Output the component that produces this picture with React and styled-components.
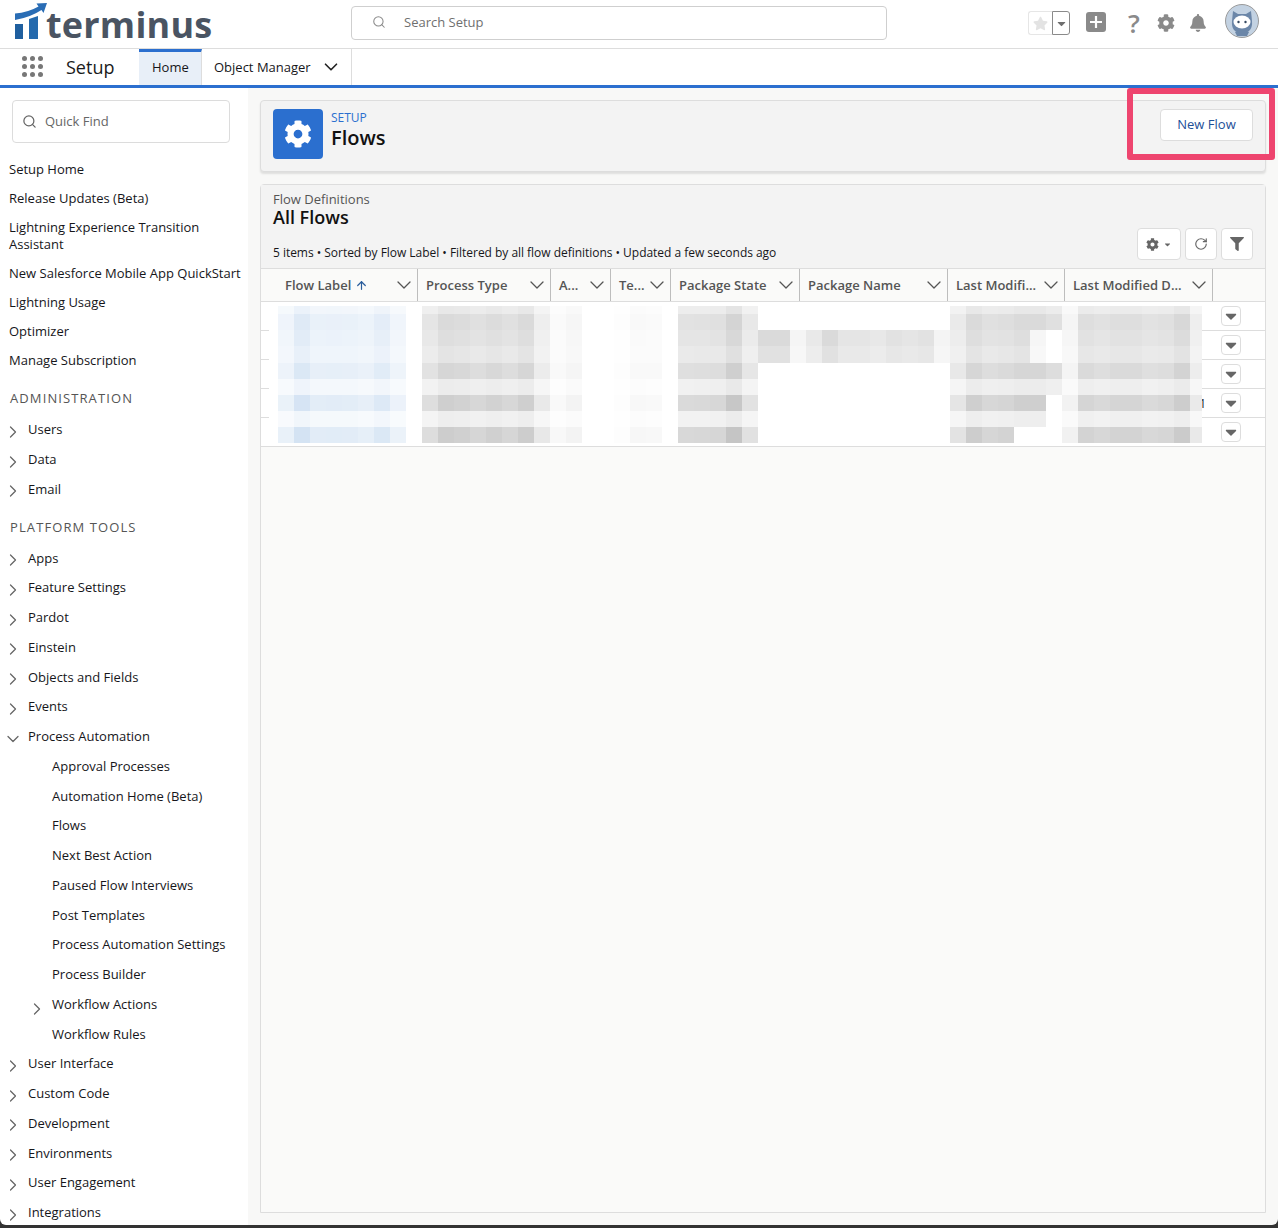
import React from 'react';
import styled, { createGlobalStyle } from 'styled-components';
import { ChevronDown, ChevronRight, Search, ArrowUp, RotateCw } from 'lucide-react';
import { FaCog, FaBell, FaFilter, FaStar, FaCaretDown } from 'react-icons/fa';

const GlobalStyle = createGlobalStyle`
  html, body { margin: 0; padding: 0; background: #fff; }
  body { font-family: "Open Sans", "Liberation Sans", sans-serif; font-size: 13px; color: #16161a; }
  * { box-sizing: border-box; }
`;

const topLinks = [
  'Setup Home',
  'Release Updates (Beta)',
  'Lightning Experience Transition Assistant',
  'New Salesforce Mobile App QuickStart',
  'Lightning Usage',
  'Optimizer',
  'Manage Subscription',
];

const adminLinks = ['Users', 'Data', 'Email'];

const platformBefore = ['Apps', 'Feature Settings', 'Pardot', 'Einstein', 'Objects and Fields', 'Events'];
const automation = [
  { label: 'Approval Processes' },
  { label: 'Automation Home (Beta)' },
  { label: 'Flows' },
  { label: 'Next Best Action' },
  { label: 'Paused Flow Interviews' },
  { label: 'Post Templates' },
  { label: 'Process Automation Settings' },
  { label: 'Process Builder' },
  { label: 'Workflow Actions', expandable: true },
  { label: 'Workflow Rules' },
];
const platformAfter = ['User Interface', 'Custom Code', 'Development', 'Environments', 'User Engagement', 'Integrations'];

const columns = [
  { label: 'Flow Label', width: 157, first: true, sorted: true },
  { label: 'Process Type', width: 133 },
  { label: 'A...', width: 60 },
  { label: 'Te...', width: 60 },
  { label: 'Package State', width: 129 },
  { label: 'Package Name', width: 148 },
  { label: 'Last Modifi...', width: 117 },
  { label: 'Last Modified D...', width: 148 },
];

// blurred table content, x is the left edge of a 16px wide cell
const mosaicRows = [
  { y: 0, h: 8, k: 0.55 },
  { y: 8, h: 16, k: 0.9 },
  { y: 24, h: 16, k: 0.8 },
  { y: 40, h: 17, k: 0.65 },
  { y: 57, h: 16, k: 1 },
  { y: 73, h: 16, k: 0.45 },
  { y: 89, h: 16, k: 1.15 },
  { y: 105, h: 16, k: 0.4 },
  { y: 121, h: 16, k: 1.2 },
];
const blueCols = [0.45, 0.9, 0.6, 0.62, 0.6, 0.52, 0.75, 0.42];
const grayCols = [0.62, 0.9, 0.85, 0.75, 0.85, 0.75, 0.9, 0.42, 0.12, 0.22, 0, 0, 0.04, 0.14, 0.12, 0, 0.03];
const stateCols = [0.7, 0.72, 0.75, 1.05, 0.55];
const nameCols = [1, 1, 0.28, 0.6, 1, 0.72, 0.72, 0.62, 0.8, 0.72, 0.8, 0.3];
const dateCols = [0.5, 0.9, 0.75, 0.8, 0.9, 0.9, 0.75, 0.25, 0.8, 0.72, 0.8, 0.8, 0.7, 0.75, 0.95, 0.4];

const mosaicCells = mosaicRows.flatMap((row, r) => {
  const cells = [];
  blueCols.forEach((d, i) => {
    const v = d * row.k;
    cells.push({ x: 278 + i * 16, row, fill: `rgb(${255 - v * 40},${255 - v * 26},${255 - v * 11})` });
  });
  const gray = (x, d) => {
    const v = Math.round(255 - d * row.k * 46);
    cells.push({ x, row, fill: `rgb(${v},${v},${v})` });
  };
  grayCols.forEach((d, i) => gray(422 + i * 16, d));
  stateCols.forEach((d, i) => gray(678 + i * 16, d));
  if (r === 2 || r === 3) nameCols.forEach((d, i) => gray(758 + i * 16, d));
  dateCols.forEach((d, i) => {
    const x = 950 + i * 16;
    if ((r === 2 || r === 3 || r === 6 || r === 7) && x === 1046) return;
    if ((r === 2 || r === 3) && x === 1030) return gray(x, 0.25);
    if (r === 8 && x >= 1014 && x <= 1046) return;
    gray(x, d);
  });
  return cells;
});

const App = () => (
  <>
    <GlobalStyle />
    <Page>
      <Header>
        <Logo>
          <svg width="36" height="40" viewBox="0 0 36 40">
            <path d="M1 20 L1 13.5 Q14 12.5 24.5 6.5 L22.5 3.5 L33 3 L29.5 13 L27.5 10 Q16 17.5 1 20 Z" fill="#2a6db5" />
            <rect x="1" y="24" width="8" height="15" fill="#1f5f9f" />
            <path d="M15 19 L24 16 L24 39 L15 39 Z" fill="#256aad" />
          </svg>
          <LogoText>terminus</LogoText>
        </Logo>
        <SearchBox>
          <Search size={14} strokeWidth={1.8} color="#8a8a8a" />
          <span>Search Setup</span>
        </SearchBox>
        <Actions>
          <Favorites>
            <StarBox><FaStar size={15} color="#e3e3e3" /></StarBox>
            <StarDrop><FaCaretDown size={13} color="#6f6f6f" /></StarDrop>
          </Favorites>
          <PlusBox>
            <svg width="20" height="20" viewBox="0 0 20 20">
              <path d="M10 4 V16 M4 10 H16" stroke="#fff" strokeWidth="2.2" />
            </svg>
          </PlusBox>
          <Help>?</Help>
          <IconSlot><FaCog size={18} color="#8a8a8a" /></IconSlot>
          <IconSlot><FaBell size={18} color="#8a8a8a" /></IconSlot>
          <Avatar>
            <svg width="34" height="34" viewBox="0 0 34 34">
              <circle cx="17" cy="17" r="16.5" fill="#c3d2e2" stroke="#9a9a9a" />
              <path d="M8 7 L13 10 H21 L26 7 L27 17 Q28 29 17 29 Q6 29 7 17 Z" fill="#6b86a8" />
              <ellipse cx="17" cy="18" rx="8.5" ry="6.5" fill="#fff" />
              <circle cx="13.5" cy="18" r="1.2" fill="#33475f" />
              <circle cx="20.5" cy="18" r="1.2" fill="#33475f" />
              <path d="M10 28 Q17 24 24 28 L22 32 H12 Z" fill="#6b86a8" />
            </svg>
          </Avatar>
        </Actions>
      </Header>
      <NavBar>
        <AppGrid>
          {Array.from({ length: 9 }).map((_, i) => <Dot key={i} />)}
        </AppGrid>
        <AppName>Setup</AppName>
        <HomeTab>Home</HomeTab>
        <MenuTab>
          Object Manager
          <ChevronDown size={22} strokeWidth={1.8} color="#222" />
        </MenuTab>
      </NavBar>
      <Body>
        <Sidebar>
          <QuickFind>
            <Search size={15} strokeWidth={2} color="#666" />
            <span>Quick Find</span>
          </QuickFind>
          <TopList>
            {topLinks.map((label) => <TopLink key={label}>{label}</TopLink>)}
          </TopList>
          <SectionTitle>ADMINISTRATION</SectionTitle>
          {adminLinks.map((label) => <TreeItem key={label} label={label} />)}
          <SectionTitle second>PLATFORM TOOLS</SectionTitle>
          {platformBefore.map((label) => <TreeItem key={label} label={label} />)}
          <TreeItem label="Process Automation" open />
          {automation.map((item) => (
            <TreeItem key={item.label} label={item.label} nested expandable={item.expandable} />
          ))}
          {platformAfter.map((label) => <TreeItem key={label} label={label} />)}
        </Sidebar>
        <Main>
          <PageHeader>
            <SetupIcon><FaCog size={28} color="#fff" /></SetupIcon>
            <TitleBlock>
              <Eyebrow>SETUP</Eyebrow>
              <PageTitle>Flows</PageTitle>
            </TitleBlock>
            <NewButton>New Flow</NewButton>
          </PageHeader>
          <ListCard>
            <ListHead>
              <ListMeta>
                <ListKicker>Flow Definitions</ListKicker>
                <ListTitle>All Flows</ListTitle>
                <ListInfo>5 items • Sorted by Flow Label • Filtered by all flow definitions • Updated a few seconds ago</ListInfo>
              </ListMeta>
              <Toolbar>
                <ToolButton wide>
                  <FaCog size={13} color="#666" />
                  <FaCaretDown size={9} color="#666" />
                </ToolButton>
                <ToolButton><RotateCw size={14} strokeWidth={2} color="#666" /></ToolButton>
                <ToolButton><FaFilter size={14} color="#666" /></ToolButton>
              </Toolbar>
            </ListHead>
            <HeadRow>
              {columns.map((col) => (
                <HeadCell key={col.label} width={col.width} first={col.first}>
                  <HeadLabel>
                    {col.label}
                    {col.sorted && <ArrowUp size={13} strokeWidth={2.2} color="#2a5d9c" />}
                  </HeadLabel>
                  <ChevronDown size={24} strokeWidth={1.3} color="#555" />
                </HeadCell>
              ))}
            </HeadRow>
            <TableBody>
              {[0, 1, 2, 3, 4].map((i) => (
                <Row key={i}>
                  {i === 3 && <Overflow>1</Overflow>}
                  <RowMenu><FaCaretDown size={18} color="#666" /></RowMenu>
                </Row>
              ))}
              <Mosaic width="933" height="137" viewBox="269 0 933 137">
                <rect x="269" y="0" width="933" height="137" fill="#fff" />
                {mosaicCells.map((c, i) => (
                  <rect key={i} x={c.x} y={c.row.y} width="16" height={c.row.h} fill={c.fill} />
                ))}
              </Mosaic>
            </TableBody>
          </ListCard>
        </Main>
      </Body>
      <Marker />
    </Page>
  </>
);

const TreeItem = ({ label, nested, open, expandable }) => (
  <TreeRow nested={nested}>
    {!nested && (open
      ? <ChevronDown size={20} strokeWidth={1.5} color="#666" />
      : <ChevronRight size={20} strokeWidth={1.5} color="#666" />)}
    {nested && expandable && <NestedArrow><ChevronRight size={20} strokeWidth={1.5} color="#666" /></NestedArrow>}
    <span>{label}</span>
  </TreeRow>
);

export default App;

const Page = styled.div`
  position: relative;
  width: 1278px;
  height: 1228px;
  display: flex;
  flex-direction: column;
  overflow: hidden;
  padding-bottom: 3px;
  background: #333;
`;

const Header = styled.header`
  height: 49px;
  flex: none;
  display: flex;
  align-items: flex-start;
  background: #fff;
  border-bottom: 1px solid #dddddd;
`;

const Logo = styled.div`
  width: 351px;
  height: 48px;
  padding: 0 0 0 14px;
  display: flex;
  align-items: flex-start;
  flex: none;
`;

const LogoText = styled.span`
  font-family: "Open Sans", sans-serif;
  font-weight: 700;
  font-size: 36px;
  line-height: 50px;
  letter-spacing: 0.2px;
  color: #4a5462;
  margin-left: -4px;
`;

const SearchBox = styled.div`
  width: 536px;
  height: 34px;
  margin-top: 6px;
  flex: none;
  display: flex;
  align-items: center;
  gap: 18px;
  padding: 0 0 2px 20px;
  background: #fff;
  border: 1px solid #cfcfcf;
  border-radius: 4px;
  color: #6f6f6f;
`;

const Actions = styled.div`
  margin-left: 141px;
  height: 46px;
  display: flex;
  align-items: center;
`;

const Favorites = styled.div`
  display: flex;
  height: 24px;
`;

const StarBox = styled.div`
  width: 24px;
  display: flex;
  align-items: center;
  justify-content: center;
  border: 1px solid #e6e6e6;
  border-right: none;
  border-radius: 3px 0 0 3px;
`;

const StarDrop = styled.div`
  width: 18px;
  display: flex;
  align-items: center;
  justify-content: center;
  border: 1px solid #8a8a8a;
  border-radius: 0 3px 3px 0;
`;

const PlusBox = styled.div`
  width: 20px;
  height: 20px;
  margin: 0 0 2px 16px;
  border-radius: 3px;
  background: #8a8a8a;
`;

const Help = styled.div`
  width: 20px;
  margin-left: 18px;
  text-align: center;
  font-size: 26px;
  line-height: 24px;
  font-weight: 600;
  color: #8a8a8a;
`;

const IconSlot = styled.div`
  width: 20px;
  margin-left: 12px;
  display: flex;
  justify-content: center;
`;

const Avatar = styled.div`
  width: 34px;
  height: 34px;
  margin: -4px 0 0 17px;
`;

const NavBar = styled.nav`
  height: 39px;
  flex: none;
  display: flex;
  align-items: stretch;
  background: #fff;
  border-bottom: 3px solid #2b6fcf;
`;

const AppGrid = styled.div`
  width: 21px;
  height: 21px;
  margin: 7px 23px 0 22px;
  display: grid;
  grid-template-columns: repeat(3, 5px);
  grid-template-rows: repeat(3, 5px);
  gap: 3px;
`;

const Dot = styled.span`
  border-radius: 50%;
  background: #777;
`;

const AppName = styled.div`
  width: 73px;
  font-size: 18px;
  line-height: 36px;
  color: #1a1a1a;
`;

const HomeTab = styled.div`
  width: 63px;
  display: flex;
  align-items: center;
  padding: 0 0 3px 13px;
  background: #e8eff8;
  border-top: 3px solid #2b6fcf;
  border-right: 1px solid #ddd;
`;

const MenuTab = styled.div`
  width: 150px;
  display: flex;
  align-items: center;
  justify-content: space-between;
  padding: 0 9px 0 12px;
  white-space: nowrap;
  border-right: 1px solid #ddd;
`;

const Body = styled.div`
  flex: 1;
  min-height: 0;
  display: flex;
  overflow: hidden;
  border-radius: 0 0 6px 6px;
`;

const Sidebar = styled.aside`
  width: 248px;
  flex: none;
  padding: 12px 0 0 0;
  overflow: hidden;
  background: #fff;
`;

const QuickFind = styled.div`
  width: 218px;
  height: 43px;
  margin-left: 12px;
  display: flex;
  align-items: center;
  gap: 8px;
  padding: 0 0 1px 9px;
  border: 1px solid #dcdcdc;
  border-radius: 4px;
  color: #666;
`;

const TopList = styled.div`
  margin-top: 12px;
`;

const TopLink = styled.div`
  padding: 6px 4px 6px 9px;
  line-height: 17px;
`;

const SectionTitle = styled.div`
  margin-top: 9px;
  padding: 6px 10px ${({ second }) => (second ? '7px' : '8px')};
  font-size: 13px;
  line-height: 17px;
  letter-spacing: 1.1px;
  color: #555;
`;

const TreeRow = styled.div`
  position: relative;
  display: flex;
  align-items: center;
  gap: 5px;
  height: 29.75px;
  padding-left: ${({ nested }) => (nested ? '52px' : '3px')};
  line-height: 17px;
  svg { margin-top: 4px; flex: none; }
`;

const NestedArrow = styled.span`
  position: absolute;
  left: 27px;
  top: 5px;
  display: flex;
`;

const Main = styled.main`
  flex: 1;
  min-width: 0;
  display: flex;
  flex-direction: column;
  gap: 12px;
  padding: 12px;
  background: #f8f8f7;
`;

const PageHeader = styled.section`
  height: 72px;
  flex: none;
  display: flex;
  align-items: flex-start;
  padding: 8px 12px;
  background: #f3f3f3;
  border: 1px solid #dddddd;
  border-radius: 4px;
  box-shadow: 0 2px 2px rgba(0, 0, 0, 0.1);
`;

const SetupIcon = styled.div`
  width: 50px;
  height: 50px;
  display: flex;
  align-items: center;
  justify-content: center;
  border-radius: 4px;
  background: #2b6fcf;
`;

const TitleBlock = styled.div`
  margin-left: 8px;
  padding-top: 1px;
`;

const Eyebrow = styled.div`
  font-size: 12px;
  line-height: 16px;
  color: #2b6fcf;
`;

const PageTitle = styled.div`
  font-size: 20px;
  font-weight: 600;
  line-height: 23px;
  color: #111;
`;

const NewButton = styled.button`
  width: 93px;
  height: 32px;
  margin-left: auto;
  padding: 0 0 2px;
  font: inherit;
  color: #1d4f97;
  background: #fff;
  border: 1px solid #dddddd;
  border-radius: 4px;
`;

const ListCard = styled.section`
  flex: 1;
  min-height: 0;
  display: flex;
  flex-direction: column;
  background: #fafaf9;
  border: 1px solid #dddddd;
  border-radius: 4px 4px 0 0;
`;

const ListHead = styled.div`
  height: 83px;
  flex: none;
  display: flex;
  justify-content: space-between;
  padding: 6px 12px 0;
  background: #f3f3f3;
`;

const ListMeta = styled.div`
  display: flex;
  flex-direction: column;
`;

const ListKicker = styled.div`
  font-size: 13px;
  line-height: 16px;
  color: #555;
`;

const ListTitle = styled.div`
  font-size: 18px;
  font-weight: 600;
  line-height: 20px;
  color: #111;
`;

const ListInfo = styled.div`
  margin-top: 18px;
  font-size: 12px;
  line-height: 16px;
  letter-spacing: -0.03px;
  color: #16161a;
`;

const Toolbar = styled.div`
  display: flex;
  gap: 4px;
  margin-top: 37px;
  height: 32px;
`;

const ToolButton = styled.button`
  width: ${({ wide }) => (wide ? '44px' : '32px')};
  height: 32px;
  display: flex;
  align-items: center;
  justify-content: center;
  gap: 4px;
  padding: 0;
  background: #fff;
  border: 1px solid #dddddd;
  border-radius: 4px;
`;

const HeadRow = styled.div`
  height: 34px;
  flex: none;
  display: flex;
  background: #fafaf9;
  border-top: 1px solid #dddddd;
  border-bottom: 1px solid #dddddd;
`;

const HeadCell = styled.div`
  width: ${({ width }) => width}px;
  flex: none;
  display: flex;
  align-items: center;
  justify-content: space-between;
  padding: 0 1px 0 ${({ first }) => (first ? '24px' : '8px')};
  border-right: 1px solid #bdbdbd;
`;

const HeadLabel = styled.span`
  display: flex;
  align-items: center;
  gap: 4px;
  font-size: 13px;
  font-weight: 600;
  color: #555;
`;

const TableBody = styled.div`
  position: relative;
  flex: none;
  background: #fff;
`;

const Row = styled.div`
  height: 29px;
  display: flex;
  align-items: center;
  justify-content: flex-end;
  padding-right: 24px;
  border-bottom: 1px solid #dddddd;
`;

const Overflow = styled.span`
  margin-right: 15px;
  font-size: 12px;
  color: #222;
`;

const RowMenu = styled.div`
  width: 20px;
  height: 20px;
  display: flex;
  align-items: center;
  justify-content: center;
  background: #fff;
  border: 1px solid #dddddd;
  border-radius: 4px;
`;

const Mosaic = styled.svg`
  position: absolute;
  left: 8px;
  top: 4px;
`;

const Marker = styled.div`
  position: absolute;
  left: 1127px;
  top: 88px;
  width: 148px;
  height: 72px;
  border: 6px solid #ee456f;
  border-radius: 3px;
  pointer-events: none;
`;
